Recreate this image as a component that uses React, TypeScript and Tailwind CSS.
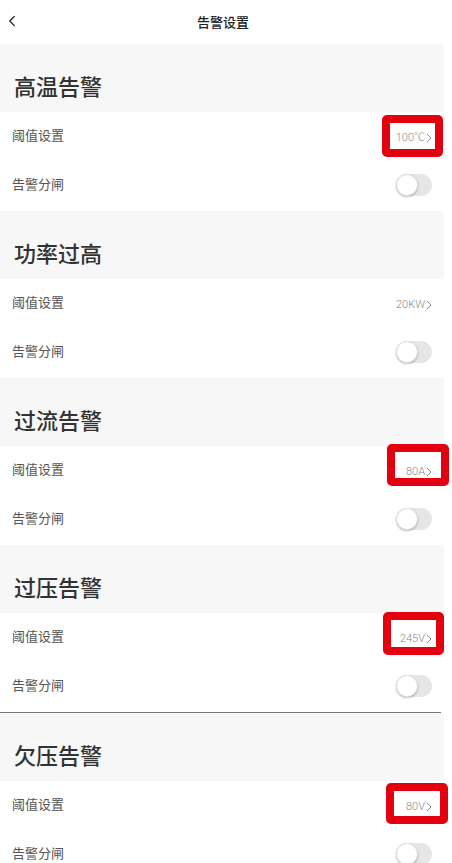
import { ChevronLeft } from 'lucide-react';

type Alarm = {
  title: string;
  value: string;
  // red annotation box placement, relative to the threshold row
  box?: { left: number; top: number; width: number; height: number };
};

const alarms: Alarm[] = [
  { title: '高温告警', value: '100℃', box: { left: 382, top: 3, width: 61, height: 42 } },
  { title: '功率过高', value: '20KW' },
  { title: '过流告警', value: '80A', box: { left: 387, top: -2, width: 62, height: 42 } },
  { title: '过压告警', value: '245V', box: { left: 383, top: -1, width: 61, height: 43 } },
  { title: '欠压告警', value: '80V', box: { left: 386, top: 2, width: 62, height: 41 } },
];

function Toggle() {
  return (
    <div className="w-[36px] h-[22px] rounded-full bg-[#e6e6e6] flex items-center">
      <div className="w-[22px] h-[22px] rounded-full bg-white shadow-[0_1px_2px_rgba(0,0,0,0.25)] border border-[#e0e0e0]" />
    </div>
  );
}

function AlarmSection({ alarm, divider }: { alarm: Alarm; divider: boolean }) {
  return (
    <section>
      <div className="h-[68px] w-[444px] bg-[#f7f7f7] flex items-end pl-[14px] pb-[13px]">
        <h2 className="text-[22px] leading-[28px] font-medium text-[#333]">{alarm.title}</h2>
      </div>
      <div className="relative h-[49px] flex items-center justify-between pl-[12px] pr-[20px] pb-[3px]">
        <span className="text-[13px] text-[#555]">阈值设置</span>
        <span className="flex items-center text-[11px] text-[#8a8a8a] font-['Roboto','Noto_Sans_CJK_SC',sans-serif] font-light translate-y-[3px]">
          {alarm.value}
          <svg width="6" height="10" viewBox="0 0 6 10" className="ml-[1px]">
            <path d="M1 1l4 4-4 4" fill="none" stroke="#8a8a8a" strokeWidth="1" />
          </svg>
        </span>
        {alarm.box && (
          <div
            className="absolute border-[8px] border-[#e3000f] rounded-[5px]"
            style={{
              left: alarm.box.left,
              top: alarm.box.top,
              width: alarm.box.width,
              height: alarm.box.height,
            }}
          />
        )}
      </div>
      <div className="h-[50px] flex items-center justify-between pl-[12px] pr-[20px] pb-[2px]">
        <span className="text-[13px] text-[#555] mt-[-2px]">告警分闸</span>
        <Toggle />
      </div>
      {divider && <div className="h-px w-[441px] bg-[#777]" />}
    </section>
  );
}

export default function App() {
  return (
    <div className="w-[452px] min-h-[863px] bg-white font-['Noto_Sans_CJK_SC','Noto_Sans',sans-serif] overflow-hidden">
      <header className="h-[44px] relative flex items-center justify-center">
        <ChevronLeft className="absolute left-[3px] top-[12px] w-[18px] h-[18px] text-[#222]" strokeWidth={1.6} />
        <h1 className="text-[13px] font-medium text-[#222] ml-[-6px]">告警设置</h1>
      </header>
      {alarms.map((a, i) => (
        <AlarmSection key={a.title} alarm={a} divider={i === 3} />
      ))}
    </div>
  );
}
